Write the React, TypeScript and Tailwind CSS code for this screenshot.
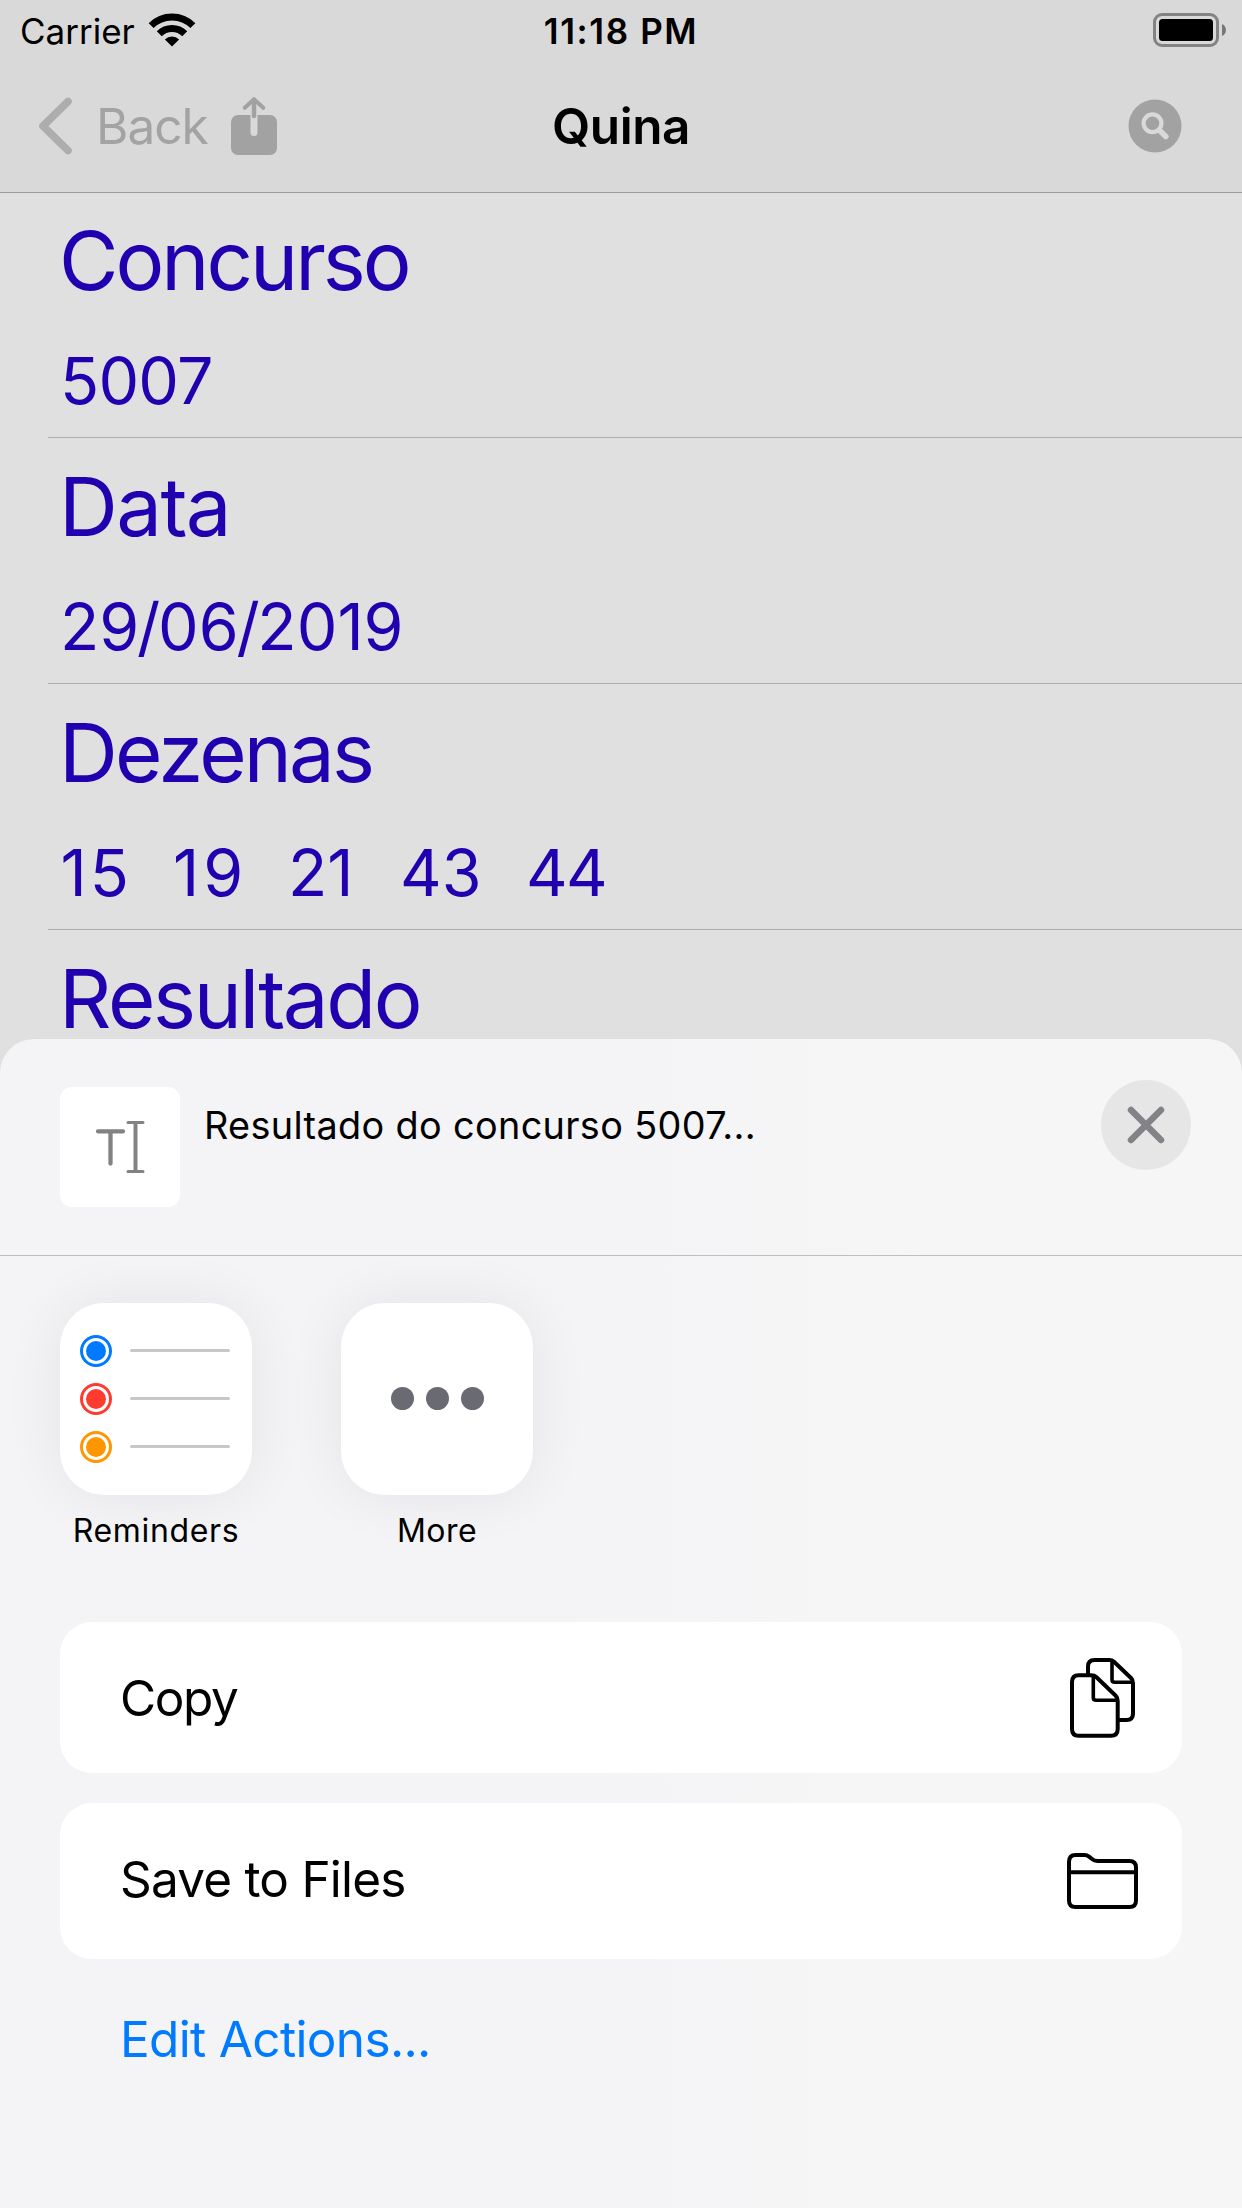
import type { ReactNode } from "react";

function WifiIcon() {
  return (
    <svg className="h-[36px] w-[50px]" viewBox="147 11.5 50 36" fill="none" stroke="#000" strokeWidth="7">
      <path d="M151.14 25.14A29.5 29.5 0 0 1 192.86 25.14" />
      <path d="M159.27 33.27A18 18 0 0 1 184.73 33.27" />
      <path d="M172 46L164.9 38.9A10.2 10.2 0 0 1 179.1 38.9Z" fill="#000" stroke="none" />
    </svg>
  );
}

function BatteryIcon() {
  return (
    <svg className="h-[36px] w-[76px]" viewBox="1152 12 76 36">
      <rect x="1154.5" y="14.5" width="63" height="31" rx="7.5" fill="none" stroke="#838383" strokeWidth="3" />
      <rect x="1159" y="19" width="54" height="22" rx="3.5" fill="#000" />
      <path d="M1222 24C1227.3 26 1227.3 34 1222 36Z" fill="#777" />
    </svg>
  );
}

function ChevronLeft() {
  return (
    <svg className="h-[64px] w-[40px]" viewBox="36 94 40 64" fill="none" stroke="#adadad" strokeWidth="7.6" strokeLinecap="round" strokeLinejoin="round">
      <path d="M68 101.5L43 126L68 150.5" />
    </svg>
  );
}

function ShareIcon() {
  return (
    <svg className="ml-[22px] h-[64px] w-[50px]" viewBox="229 94 50 64" fill="none" strokeLinecap="round" strokeLinejoin="round">
      <rect x="231" y="115" width="46" height="40" rx="7" fill="#a2a2a2" />
      <path d="M254 116V132.5" stroke="#d9d9d9" strokeWidth="7" />
      <path d="M254 100V116" stroke="#a2a2a2" strokeWidth="4.5" />
      <path d="M244.8 107.8L254 99.2L263.2 107.8" stroke="#a2a2a2" strokeWidth="4" />
    </svg>
  );
}

function SearchIcon() {
  return (
    <svg className="h-[54px] w-[54px]" viewBox="1128.5 99.5 54 54" fill="none" stroke="#d9d9d9">
      <circle cx="1155.5" cy="126.5" r="26.5" fill="#a2a2a2" stroke="none" />
      <circle cx="1153" cy="123.7" r="8.9" strokeWidth="4.3" />
      <path d="M1160 130.7L1166.3 137" strokeWidth="5.6" strokeLinecap="round" />
    </svg>
  );
}

function TextCursorIcon() {
  return (
    <svg className="h-[56px] w-[54px]" viewBox="93 1119 54 56" fill="none" stroke="#828282" strokeLinecap="round">
      <path d="M98 1131.3H123M110.5 1131.3V1163.5" strokeWidth="4.3" />
      <path d="M128 1122.5H143M128 1171.5H143" strokeWidth="3" />
      <path d="M135.5 1122.5V1171.5" strokeWidth="4" strokeLinecap="butt" />
    </svg>
  );
}

function CloseIcon() {
  return (
    <svg className="h-[40px] w-[40px]" viewBox="0 0 40 40" fill="none" stroke="#828287" strokeWidth="6.5" strokeLinecap="round">
      <path d="M5 5L35 35M35 5L5 35" />
    </svg>
  );
}

function CopyIcon() {
  return (
    <svg className="h-[84px] w-[70px]" viewBox="1068 1656 70 84" fill="none" stroke="#000" strokeWidth="4" strokeLinejoin="round">
      <path d="M1088 1675V1666.5Q1088 1660 1094.5 1660H1109.5Q1112 1660 1114 1661.8L1131 1678Q1133 1680 1133 1683V1713.5Q1133 1720 1126.5 1720H1118" />
      <path d="M1112 1660.5V1679.5Q1112 1682.3 1114.8 1682.3H1132.5" strokeWidth="3.6" />
      <path d="M1072 1682Q1072 1675.3 1078.5 1675.3H1091Q1094.5 1675.3 1096.5 1677.2L1115.5 1695.5Q1117.7 1697.7 1117.7 1701V1729Q1117.7 1735.7 1111 1735.7H1078.5Q1072 1735.7 1072 1729Z" />
      <path d="M1093.3 1676V1697.5Q1093.3 1700.3 1096.1 1700.3H1117" strokeWidth="3.6" />
    </svg>
  );
}

function FolderIcon() {
  return (
    <svg className="h-[60px] w-[75px]" viewBox="1065 1851 75 60" fill="none" stroke="#000" strokeWidth="4" strokeLinejoin="round">
      <path d="M1069 1862Q1069 1855 1075.5 1855H1084.5Q1087 1855 1089 1856.6L1092 1859Q1094.3 1861 1097.5 1861H1129.5Q1136 1861 1136 1867.5V1900.5Q1136 1907 1129.5 1907H1075.5Q1069 1907 1069 1900.5Z" />
      <path d="M1069 1872.3H1136" />
    </svg>
  );
}

function ResultRow({ title, titleClass, children }: { title: string; titleClass: string; children?: ReactNode }) {
  return (
    <section className="ml-[48px] flex h-[246px] flex-col border-b border-[#acacac] pt-[20px] text-[#2100b0]">
      <h2 className={`text-[81.5px] leading-[98px] ${titleClass}`}>{title}</h2>
      <div className="mt-[32px] text-[64.5px] leading-[79px]">{children}</div>
    </section>
  );
}

function ReminderLine({ ring, fill }: { ring: string; fill: string }) {
  return (
    <div className="flex items-center">
      <div className={`flex size-[32px] items-center justify-center rounded-full border-3 ${ring}`}>
        <div className={`size-[20px] rounded-full ${fill}`} />
      </div>
      <div className="mb-px ml-[18px] h-[3px] w-[100px] rounded-full bg-[#c7c7c9]" />
    </div>
  );
}

function AppTile({ label, labelClass, children }: { label: string; labelClass: string; children: ReactNode }) {
  return (
    <div className="flex w-[192px] flex-col items-center">
      <div className="flex size-[192px] items-center rounded-[44px] bg-white shadow-[0_0_60px_rgba(0,0,0,0.07)]">{children}</div>
      <span className={`mt-[16px] text-[32px] leading-[40px] ${labelClass}`}>{label}</span>
    </div>
  );
}

export default function App() {
  return (
    <div className="relative h-[2208px] w-[1242px] overflow-hidden bg-[#e0e0e0] font-['Inter',sans-serif] text-black">
      <header className="h-[193px] border-b border-[#9d9d9d] bg-[#d9d9d9]">
        <div className="grid h-[60px] grid-cols-3 items-center">
          <div className="flex items-center pl-[20px]">
            <span className="w-[127px] pt-px text-[35px] leading-[40px]">Carrier</span>
            <WifiIcon />
          </div>
          <span className="pt-px text-center text-[35px] leading-[40px] font-semibold tracking-[1.6px]">11:18 PM</span>
          <div className="flex justify-end pr-[14px]">
            <BatteryIcon />
          </div>
        </div>
        <nav className="grid h-[132px] grid-cols-3 items-center text-[49.5px]">
          <div className="flex items-center pl-[36px]">
            <ChevronLeft />
            <span className="ml-[20px] w-[111px] tracking-[-1px] text-[#a3a3a3]">Back</span>
            <ShareIcon />
          </div>
          <h1 className="text-center font-semibold tracking-[-0.4px]">Quina</h1>
          <div className="flex justify-end pr-[60px]">
            <SearchIcon />
          </div>
        </nav>
      </header>

      <main className="-mt-px">
        <ResultRow title="Concurso" titleClass="pl-[11px] tracking-[-3.03px]">
          <p className="pl-[12px] tracking-[-0.8px]">5007</p>
        </ResultRow>
        <ResultRow title="Data" titleClass="pl-[11px] tracking-[-1.6px]">
          <p className="pl-[12px]">
            29<span className="-mx-[2.3px]">/</span>06<span className="-mx-[2.3px]">/</span>2019
          </p>
        </ResultRow>
        <ResultRow title="Dezenas" titleClass="pl-[11px] tracking-[-2.9px]">
          <p className="flex pl-[12.5px]">
            <span className="w-[112.5px] tracking-[3px]">15</span>
            <span className="w-[115px] tracking-[4px]">19</span>
            <span className="w-[112px]">21</span>
            <span className="w-[126px]">43</span>
            <span className="tracking-[-1.67px]">44</span>
          </p>
        </ResultRow>
        <ResultRow title="Resultado" titleClass="pl-[11px] tracking-[-2.35px]" />
      </main>

      <div className="absolute inset-x-0 bottom-0 flex h-[1169px] flex-col rounded-t-[34px] bg-linear-to-r from-[#f4f4f7] from-45% to-[#f6f6f6] to-75%">
        <div className="flex h-[217px] items-start border-b border-[#bebec0] pl-[60px]">
          <div className="mt-[48px] flex size-[120px] items-center justify-center rounded-[12px] bg-white">
            <TextCursorIcon />
          </div>
          <p className="mt-[62px] ml-[24px] text-[37.8px] leading-[48px] tracking-[0.35px]">Resultado do concurso 5007...</p>
          <button className="mt-[41px] mr-[51px] ml-auto flex size-[90px] items-center justify-center rounded-full bg-[#e6e6e6]">
            <CloseIcon />
          </button>
        </div>

        <div className="flex h-[366px] gap-[89px] pt-[47px] pl-[60px]">
          <AppTile label="Reminders" labelClass="tracking-[0.67px]">
            <div className="flex flex-col gap-[16px] pl-[20px]">
              <ReminderLine ring="border-[#007aff]" fill="bg-[#007aff]" />
              <ReminderLine ring="border-[#ff3b30]" fill="bg-[#ff3b30]" />
              <ReminderLine ring="border-[#ff9500]" fill="bg-[#ff9500]" />
            </div>
          </AppTile>
          <AppTile label="More" labelClass="tracking-[0.43px]">
            <div className="flex gap-[12px] pb-[2px] pl-[50px]">
              <div className="size-[23px] rounded-full bg-[#6a6a72]" />
              <div className="size-[23px] rounded-full bg-[#6a6a72]" />
              <div className="size-[23px] rounded-full bg-[#6a6a72]" />
            </div>
          </AppTile>
        </div>

        <div className="mx-[60px] flex flex-col text-[49.5px] leading-[60px]">
          <button className="flex h-[151px] items-center justify-between rounded-[32px] bg-white pr-[44px] pl-[60px]">
            <span className="tracking-[-1.4px]">Copy</span>
            <CopyIcon />
          </button>
          <button className="mt-[30px] flex h-[156px] items-center justify-between rounded-[32px] bg-white pr-[42px] pl-[60px]">
            <span className="pb-[5px] tracking-[-0.8px]">Save to Files</span>
            <FolderIcon />
          </button>
          <button className="mt-[50px] pl-[60px] text-left tracking-[-0.66px] text-[#007aff]">Edit Actions...</button>
        </div>
      </div>
    </div>
  );
}
